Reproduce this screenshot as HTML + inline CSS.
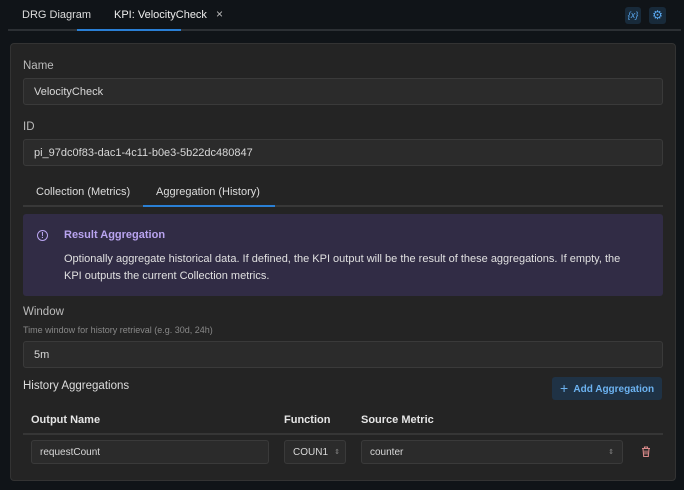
<!DOCTYPE html><html><head><style>
*{box-sizing:border-box;margin:0;padding:0}
body{width:684px;height:490px;background:#101418;font-family:"Liberation Sans",sans-serif;color:#ddd;position:relative;overflow:hidden;font-size:11px}
.a{position:absolute}
.inp{position:absolute;background:#2b2b2b;border:1px solid #3a3a3a;border-radius:3px;color:#d8d8d8;font-size:11px;padding-left:10px;display:flex;align-items:center}
.lbl{position:absolute;font-size:11.5px;color:#bbb}
</style></head><body>
<div class="a" style="left:22px;top:9px;font-size:11px;color:#ddd">DRG Diagram</div>
<div class="a" style="left:114px;top:9px;font-size:11px;color:#eee">KPI: VelocityCheck</div>
<div class="a" style="left:216px;top:7px;font-size:12px;color:#bbb">×</div>
<div class="a" style="left:8px;top:29px;width:673px;height:2px;background:#2c3034"></div>
<div class="a" style="left:77px;top:29px;width:104px;height:2px;background:#2a7fd4"></div>
<div class="a" style="left:625px;top:7px;width:16px;height:17px;background:#182a3a;border-radius:3px;color:#5aa8f0;font-size:9px;text-align:center;line-height:17px;font-style:italic">{x}</div>
<div class="a" style="left:649px;top:7px;width:17px;height:17px;background:#182a3a;border-radius:3px;color:#5aa8f0;font-size:12px;text-align:center;line-height:17px">⚙</div>
<div class="a" style="left:10px;top:43px;width:666px;height:438px;background:#242424;border:1px solid #333;border-radius:4px"></div>
<div class="lbl" style="left:23px;top:60px">Name</div>
<div class="inp" style="left:23px;top:78px;width:640px;height:27px">VelocityCheck</div>
<div class="lbl" style="left:23px;top:121px">ID</div>
<div class="inp" style="left:23px;top:139px;width:640px;height:27px">pi_97dc0f83-dac1-4c11-b0e3-5b22dc480847</div>
<div class="a" style="left:36px;top:186px;font-size:11px;color:#ddd">Collection (Metrics)</div>
<div class="a" style="left:156px;top:186px;font-size:11px;color:#ddd">Aggregation (History)</div>
<div class="a" style="left:23px;top:205px;width:640px;height:2px;background:#383838"></div>
<div class="a" style="left:143px;top:205px;width:132px;height:2px;background:#2a7fd4"></div>
<div class="a" style="left:23px;top:214px;width:640px;height:82px;background:#312c45;border-radius:3px"></div>
<div class="a" style="left:37px;top:230px;width:11px;height:11px;border:1.3px solid #b9a4f0;border-radius:50%;color:#b9a4f0;font-size:8px;line-height:9px;text-align:center;font-weight:bold">!</div>
<div class="a" style="left:64px;top:229px;font-size:11px;font-weight:bold;color:#b9a4f0">Result Aggregation</div>
<div class="a" style="left:64px;top:251px;width:572px;font-size:11px;line-height:17px;color:#e0e0e0">Optionally aggregate historical data. If defined, the KPI output will be the result of these aggregations. If empty, the KPI outputs the current Collection metrics.</div>
<div class="lbl" style="left:23px;top:306px">Window</div>
<div class="a" style="left:23px;top:325px;font-size:9px;color:#888">Time window for history retrieval (e.g. 30d, 24h)</div>
<div class="inp" style="left:23px;top:341px;width:640px;height:27px">5m</div>
<div class="a" style="left:23px;top:380px;font-size:11.5px;color:#ddd">History Aggregations</div>
<div class="a" style="left:552px;top:377px;width:110px;height:23px;background:#1f3245;border-radius:3px;color:#6cb2f0;font-size:10px;font-weight:bold;line-height:23px;padding-left:8px"><span style="font-size:14px;font-weight:normal;vertical-align:-1px">+</span>&nbsp; Add Aggregation</div>
<div class="a" style="left:31px;top:414px;font-size:11px;font-weight:bold;color:#e5e5e5">Output Name</div>
<div class="a" style="left:284px;top:414px;font-size:11px;font-weight:bold;color:#e5e5e5">Function</div>
<div class="a" style="left:361px;top:414px;font-size:11px;font-weight:bold;color:#e5e5e5">Source Metric</div>
<div class="a" style="left:23px;top:433px;width:640px;height:2px;background:#363636"></div>
<div class="inp" style="left:31px;top:440px;width:238px;height:24px;font-size:10px;padding-left:8px">requestCount</div>
<div class="inp" style="left:284px;top:440px;width:62px;height:24px;font-size:10px;padding-left:8px">COUN1<span style="position:absolute;right:5px;font-size:7px;color:#888">⇕</span></div>
<div class="inp" style="left:361px;top:440px;width:262px;height:24px;font-size:10px;padding-left:8px">counter<span style="position:absolute;right:8px;font-size:7px;color:#888">⇕</span></div>
<svg class="a" style="left:641px;top:446px" width="10" height="11" viewBox="0 0 10 11"><path d="M1 2.5h8M3.5 2.5V1h3v1.5M2 2.5l.7 8h4.6l.7-8M4 4.5v4M6 4.5v4" stroke="#d98a8a" fill="none" stroke-width="1.1"/></svg>
</body></html>
